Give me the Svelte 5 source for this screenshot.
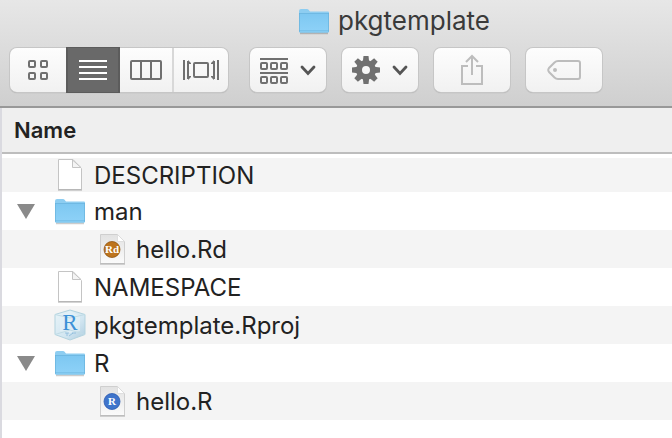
<script>
  const rows = [
    { name: 'DESCRIPTION', icon: 'file', depth: 0 },
    { name: 'man', icon: 'folder', depth: 0, open: true },
    { name: 'hello.Rd', icon: 'rd', depth: 1 },
    { name: 'NAMESPACE', icon: 'file', depth: 0 },
    { name: 'pkgtemplate.Rproj', icon: 'project', depth: 0 },
    { name: 'R', icon: 'folder', depth: 0, open: true },
    { name: 'hello.R', icon: 'r', depth: 1 }
  ];
  let view = $state('list');
  const teeth = [0, 45, 90, 135, 180, 225, 270, 315];
</script>

{#snippet folder()}
  <svg width="32" height="28" viewBox="0 0 32 28" aria-hidden="true">
    <path d="M2 26.500h28" stroke="#000" stroke-opacity=".2" stroke-width="1.500" />
    <path d="M1 4q0-2 2-2h6q1 0 1.600.8l1.400 1.700H30q1 0 1 1V11H1z" fill="#8dcdf1" />
    <path d="M1 6h30v18.500q0 1-1 1H2q-1 0-1-1z" fill="url(#folderFill)" />
    <path d="M1 6.500h30" stroke="#6fb9e3" />
    <path d="M1 23.500h30" stroke="#74bce4" stroke-opacity=".7" />
    <path d="M1.500 6v18.500q0 .7.700.7h27.600q.7 0 .7-.7V6" fill="none" stroke="#68b2dc" stroke-opacity=".7" />
  </svg>
{/snippet}

{#snippet chevron()}
  <svg width="16" height="12" viewBox="0 0 16 12" aria-hidden="true">
    <path d="M2 3l6 6.500L14 3" fill="none" stroke="#555" stroke-width="2.800" stroke-linecap="round" />
  </svg>
{/snippet}

{#snippet badge(label, color, dark)}
  <svg width="32" height="34" viewBox="0 0 32 34" aria-hidden="true">
    <path d="M4.500 2.500h17l7 7v22h-24z" fill="url(#pageFill)" stroke="#cfcfcf" />
    <path d="M4 32h25" stroke="#aaa" />
    <path d="M21.500 2.500v7h7z" fill="#fff" stroke="#d9d9d9" stroke-width=".8" />
    <circle cx="16" cy="17.500" r="8" fill={color} stroke={dark} stroke-width=".8" />
    <text x="16" y="21" text-anchor="middle" class="seal">{label}</text>
  </svg>
{/snippet}

<svg class="defs" width="0" height="0" aria-hidden="true">
  <defs>
    <linearGradient id="folderFill" x2="0" y2="1">
      <stop offset="0" stop-color="#7dc7f1" /><stop offset="1" stop-color="#8ed2f8" />
    </linearGradient>
    <linearGradient id="pageFill" x2="0" y2="1">
      <stop offset="0" stop-color="#e2e2e2" /><stop offset="1" stop-color="#fbfbfb" />
    </linearGradient>
    <linearGradient id="cubeFill" x2="1" y2="1">
      <stop offset="0" stop-color="#e9f4f8" /><stop offset=".6" stop-color="#d2e6f1" /><stop offset="1" stop-color="#aecde0" />
    </linearGradient>
  </defs>
</svg>

<div class="window">
  <header>
    <h1>{@render folder()}pkgtemplate</h1>
    <div class="toolbar">
      <div class="views" role="group" aria-label="View">
        <button class="icons" class:active={view === 'icons'} aria-label="Icons" onclick={() => (view = 'icons')}>
          <svg width="20" height="20" viewBox="0 0 20 20" fill="none" stroke="currentColor" stroke-width="2">
            <rect x="1" y="1" width="6" height="6" rx="1" /><rect x="13" y="1" width="6" height="6" rx="1" />
            <rect x="1" y="13" width="6" height="6" rx="1" /><rect x="13" y="13" width="6" height="6" rx="1" />
          </svg>
        </button>
        <button class="list" class:active={view === 'list'} aria-label="List" onclick={() => (view = 'list')}>
          <svg width="28" height="20" viewBox="0 0 28 20" stroke="currentColor" stroke-width="2">
            <path d="M0 1h28M0 7h28M0 13h28M0 19h28" />
          </svg>
        </button>
        <button class="columns" class:active={view === 'columns'} aria-label="Columns" onclick={() => (view = 'columns')}>
          <svg width="32" height="20" viewBox="0 0 32 20" fill="none" stroke="currentColor" stroke-width="2">
            <rect x="1" y="1" width="30" height="18" rx="1" /><path d="M11 1v18M21 1v18" />
          </svg>
        </button>
        <button class="flow" class:active={view === 'flow'} aria-label="Cover Flow" onclick={() => (view = 'flow')}>
          <svg width="36" height="20" viewBox="0 0 36 20" fill="none" stroke="currentColor" stroke-width="2">
            <path d="M1 0v20M35 0v20M5 1v18M31 1v18" />
            <path d="M5 0l3 3v1H5zM5 20l3-3v-1H5zM31 0l-3 3v1h3zM31 20l-3-3v-1h3z" fill="currentColor" stroke="none" />
            <rect x="11" y="3" width="14" height="14" rx="1" />
          </svg>
        </button>
      </div>
      <button class="tool" aria-label="Arrange">
        <svg width="28" height="28" viewBox="0 0 28 28" fill="none" stroke="currentColor" stroke-width="2">
          <path d="M0 3h28M0 17h28" />
          {#each [7, 21] as y}
            {#each [1, 11, 21] as x}<rect {x} {y} width="6" height="6" rx="1" />{/each}
          {/each}
        </svg>
        {@render chevron()}
      </button>
      <button class="tool" aria-label="Action">
        <svg width="28" height="28" viewBox="-14 -14 28 28" fill="currentColor">
          {#each teeth as a}<path d="M-3.200 -8l.7-6h5l.7 6z" transform="rotate({a})" />{/each}
          <circle r="7" fill="none" stroke="currentColor" stroke-width="6" />
        </svg>
        {@render chevron()}
      </button>
      <button class="tool" aria-label="Share" disabled>
        <svg width="22" height="32" viewBox="0 0 22 32" fill="none" stroke="currentColor" stroke-width="2">
          <path d="M7 12H1v18h20V12h-6M11 21V3M5 8l6-6 6 6" />
        </svg>
      </button>
      <button class="tool" aria-label="Tags" disabled>
        <svg width="34" height="20" viewBox="0 0 34 20" fill="none" stroke="currentColor" stroke-width="2">
          <path d="M11 1h20q2 0 2 2v14q0 2-2 2H11q-2 0-3.500-1.500L2 12q-1.500-2 0-4l5.500-5.500Q9 1 11 1z" />
          <circle cx="8" cy="10" r="2" fill="currentColor" stroke="none" />
        </svg>
      </button>
    </div>
  </header>

  <main>
    <table>
      <thead><tr><th scope="col">Name</th></tr></thead>
      <tbody>
        {#each rows as row}
          <tr>
            <td>
              <div class="entry" class:child={row.depth === 1}>
                {#if row.open}
                  <button class="disclosure" aria-label="Collapse {row.name}">
                    <svg width="18" height="15" viewBox="0 0 18 15"><path d="M0 0h18L9 15z" fill="#8a8a8a" /></svg>
                  </button>
                {/if}
                {#if row.icon === 'folder'}
                  {@render folder()}
                {:else if row.icon === 'rd'}
                  {@render badge('Rd', '#bd741d', '#8f5413')}
                {:else if row.icon === 'r'}
                  {@render badge('R', '#3f74cb', '#2b5bb0')}
                {:else if row.icon === 'project'}
                  <svg width="32" height="34" viewBox="0 0 32 34" aria-hidden="true">
                    <path d="M16 2l15 4.500v20L16 32 1 26.500v-20z" fill="url(#cubeFill)" stroke="#b3d3df" />
                    <path d="M6 8l10-5 10 5v15l-10 2-10-2z" fill="#e6f2f8" fill-opacity=".6" />
                    <path d="M1 6.500L16 10l15-3.500M16 22L1 26.500M16 22l15 4.500" fill="none" stroke="#c0dce6" />
                    <text x="16" y="22" text-anchor="middle" class="cube">R</text>
                    <path d="M11 25h4M18 25h4M13 25v3M19 25l-4 3" stroke="#82b5d9" stroke-opacity=".7" />
                  </svg>
                {:else}
                  <svg width="32" height="34" viewBox="0 0 32 34" aria-hidden="true">
                    <path d="M4.500 1.500h14.500l8.500 9v21h-23z" fill="#fff" stroke="#c4c4c4" />
                    <path d="M4 32h24" stroke="#aaa" />
                    <path d="M18.500 2v7.500h8.500z" fill="#f4f4f4" stroke="#c4c4c4" />
                  </svg>
                {/if}
                <span>{row.name}</span>
              </div>
            </td>
          </tr>
        {/each}
      </tbody>
    </table>
  </main>
</div>

<style>
  :global(body) { margin: 0; background: #fff; }
  .defs { position: absolute; }
  .window {
    display: flex; flex-direction: column; min-height: 100vh;
    font-family: Inter, "Liberation Sans", sans-serif; color: #222;
  }
  svg { display: block; flex: none; }
  button {
    display: flex; align-items: center; justify-content: center;
    box-sizing: border-box; padding: 0; border: 0; background: none; color: #707070;
  }
  button:disabled { color: #bdbdbd; }
  header {
    padding-bottom: 14px; border-bottom: 2px solid #989898;
    background: linear-gradient(#e7e7e7, #cfcfcf);
  }
  h1 {
    display: flex; align-items: center; justify-content: center; gap: 8px;
    box-sizing: border-box; height: 48px; margin: 0; padding: 0 0 6px 116px;
    font-size: 26px; line-height: 32px; font-weight: 400; color: #3a3a3a;
  }
  .toolbar { display: flex; gap: 16px; padding-left: 10px; }
  .views, .tool {
    height: 44px; border-radius: 7px; background: linear-gradient(#fdfdfd, #f1f1f1);
    box-shadow: 0 0 0 1px #c6c6c6, 0 1px 1px #999;
  }
  .views { display: flex; margin-right: 6px; }
  .icons, .flow { width: 56px; }
  .list { width: 54px; }
  .columns { width: 52px; }
  .flow { border-left: 2px solid #d8d8d8; }
  .views .active {
    color: #fff; background: #696969;
    box-shadow: inset 2px 0 #5c5c5c, inset -2px 0 #5c5c5c, 0 -1px #5c5c5c, 0 1px #5c5c5c;
  }
  .tool { width: 76px; gap: 12px; }
  main { flex: 1; border-left: 2px solid #dadae0; }
  table { width: 100%; border-collapse: separate; border-spacing: 0; }
  th {
    height: 44px; padding: 0 0 0 12px; text-align: left; background: #efefef;
    border-bottom: 2px solid #bdbdbd; font-size: 22px; line-height: 28px; font-weight: 600;
  }
  td { padding: 0; font-size: 24px; line-height: 30px; }
  .entry { display: flex; align-items: center; gap: 8px; height: 38px; padding-left: 52px; }
  .entry span { padding-top: 2px; }
  .child { padding-left: 94px; }
  tbody tr:nth-child(odd) { background: #f4f4f4; }
  tbody tr:first-child td { border-top: 4px solid #fff; }
  tbody tr:first-child .entry { height: 34px; }
  .disclosure { width: 18px; margin-left: -37px; margin-right: 11px; }
  .seal { font: 700 11px "Liberation Serif", serif; fill: #fff; }
  .cube { font: 400 23px "Liberation Serif", serif; fill: #3d91d7; }
</style>
